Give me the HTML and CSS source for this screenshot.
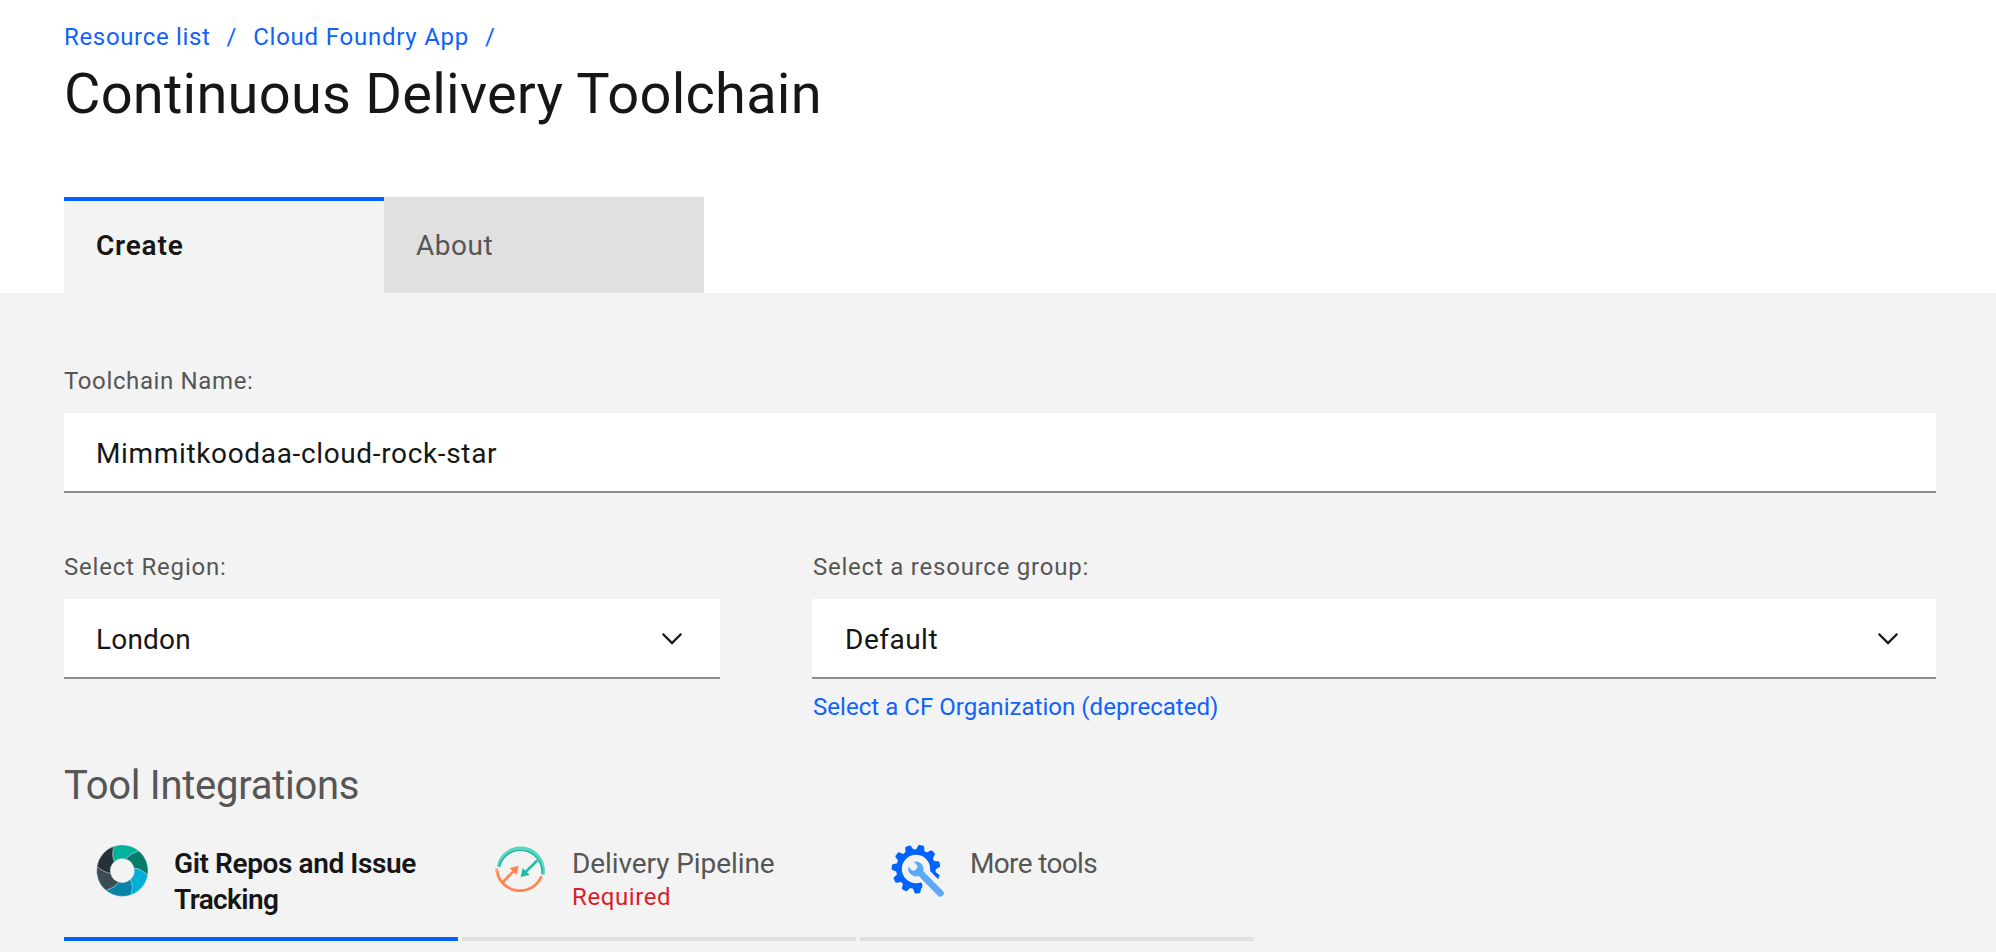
FILE: index.html
```
<!DOCTYPE html>
<html lang="en">
<head>
<meta charset="utf-8">
<title>Continuous Delivery Toolchain</title>
<link rel="stylesheet" href="styles.css">
</head>
<body>
<header class="header">
  <nav class="breadcrumb">
    <a class="crumb crumb-first" href="#">Resource list</a><span class="slash">/</span>
    <a class="crumb" href="#">Cloud Foundry App</a><span class="slash">/</span>
  </nav>
  <h1 class="title">Continuous Delivery Toolchain</h1>
  <div class="tabs">
    <div class="tab tab-active">Create</div>
    <div class="tab tab-about">About</div>
  </div>
</header>
<main class="content">
  <div class="field">
    <label class="label label-name">Toolchain Name:</label>
    <div class="control"><span class="value value-name">Mimmitkoodaa-cloud-rock-star</span></div>
  </div>
  <div class="row">
    <div class="field">
      <label class="label">Select Region:</label>
      <div class="control"><span class="value">London</span>
        <svg class="chevron" viewBox="0 0 22 14"><path d="M1.7 1.7 11 11 20.3 1.7"/></svg>
      </div>
    </div>
    <div class="field">
      <label class="label label-group">Select a resource group:</label>
      <div class="control"><span class="value value-group">Default</span>
        <svg class="chevron" viewBox="0 0 22 14"><path d="M1.7 1.7 11 11 20.3 1.7"/></svg>
      </div>
      <a class="org-link" href="#">Select a CF Organization (deprecated)</a>
    </div>
  </div>
  <h2 class="section-title">Tool Integrations</h2>
  <div class="tools">
    <div class="tool tool-active">
      <svg class="tool-icon" viewBox="42 39 168 168">
        <defs><path id="wedge" d="M100.7 49.6A77 77 0 0 1 176.5 63Q148 72 138.1 87.8A36 36 0 0 0 102.9 95.3Q94.2 78.8 100.7 49.6Z"/></defs>
        <g stroke="#b9cfd2" stroke-width="1.2">
          <use href="#wedge" fill="#00b299"/>
          <use href="#wedge" fill="#047c69" transform="rotate(60 127 122)"/>
          <use href="#wedge" fill="#00b0d7" transform="rotate(120 127 122)"/>
          <use href="#wedge" fill="#0784aa" transform="rotate(180 127 122)"/>
          <use href="#wedge" fill="#3c4c56" transform="rotate(240 127 122)"/>
          <use href="#wedge" fill="#243139" transform="rotate(300 127 122)"/>
        </g>
      </svg>
      <div class="tool-name name-git">Git Repos and Issue<br><span class="tracking">Tracking</span></div>
    </div>
    <div class="tool">
      <svg class="tool-icon" viewBox="37 37 168 168" fill="none">
        <path d="M56 108A68 68 0 0 1 190 132" stroke="#5ad5c3" stroke-width="9"/>
        <path d="M59 109A65 65 0 0 1 187 130" stroke="#1db9a3" stroke-width="5"/>
        <path d="M173 89 136 126" stroke="#22bba6" stroke-width="8"/>
        <path d="M123 139 129 112 150 133Z" fill="#22bba6"/>
        <path d="M51 113A70 68 0 0 0 186 137" stroke="#ffa27b" stroke-width="9"/>
        <path d="M54 122A67 65 0 0 0 184 137" stroke="#ff7d4c" stroke-width="5"/>
        <path d="M67 157 104 119" stroke="#ff8353" stroke-width="8"/>
        <path d="M117 105 90 112 111 133Z" fill="#ff8353"/>
      </svg>
      <div class="tool-name">Delivery Pipeline<div class="required">Required</div></div>
    </div>
    <div class="tool">
      <svg class="tool-icon" viewBox="30 39 168 168">
        <defs><path id="tooth" d="M94 64 99 47Q100 44 103 44H113Q116 44 117 47L122 64Z"/></defs>
        <g fill="#0062ff">
          <use href="#tooth" transform="rotate(13 108 117)"/>
          <use href="#tooth" transform="rotate(45.7 108 117)"/>
          <use href="#tooth" transform="rotate(78.4 108 117)"/>
          <use href="#tooth" transform="rotate(111.1 108 117)"/>
          <use href="#tooth" transform="rotate(176.5 108 117)"/>
          <use href="#tooth" transform="rotate(209.2 108 117)"/>
          <use href="#tooth" transform="rotate(241.9 108 117)"/>
          <use href="#tooth" transform="rotate(274.6 108 117)"/>
          <use href="#tooth" transform="rotate(307.3 108 117)"/>
          <use href="#tooth" transform="rotate(340 108 117)"/>
        </g>
        <circle cx="108" cy="117" r="51" fill="none" stroke="#0062ff" stroke-width="17"/>
        <path d="M148 121 182 155 160 189 127 189V162L108 142Z" fill="#f3f3f3"/>
        <path d="M101 95A24 24 0 0 1 130 124L188 182A9.5 9.5 0 0 1 174 197L116 138A24 24 0 0 1 85 110L95 120Q101 125 108 118 115 111 110 104Z" fill="#5aaafa"/>
      </svg>
      <div class="tool-name name-more">More tools</div>
    </div>
  </div>
</main>
</body>
</html>
```
FILE: styles.css
```
* { box-sizing: border-box; }
body { margin: 0; width: 1996px; height: 952px; overflow: hidden; background: #f3f3f3; color: #161616; font-family: Roboto, "Liberation Sans", sans-serif; font-weight: 400; }
a { color: #0f62fe; text-decoration: none; }
.header { height: 293px; padding: 21px 60px 0 64px; background: #fff; }
.breadcrumb { display: flex; height: 32px; font-size: 24px; line-height: 32px; letter-spacing: .77px; white-space: nowrap; color: #0f62fe; }
.crumb-first { letter-spacing: .66px; }
.slash { margin: 0 16px; }
.title { margin: 9px 0 71px; font-size: 56px; line-height: 64px; font-weight: 400; letter-spacing: .24px; white-space: nowrap; }
.tabs { display: flex; height: 96px; }
.tab { width: 320px; padding: 31px 32px 0; background: #e0e0e0; color: #565656; font-size: 28px; line-height: 36px; letter-spacing: .5px; }
.tab-active { padding-top: 27px; border-top: 4px solid #0062ff; background: #f3f3f3; color: #161616; font-weight: 600; letter-spacing: .8px; }
.content { padding: 72px 60px 0 64px; }
.field { display: flex; flex-direction: column; }
.label { margin-bottom: 16px; font-size: 24px; line-height: 32px; letter-spacing: .8px; color: #565656; white-space: nowrap; }
.label-name { letter-spacing: .63px; }
.label-group { padding-left: 1px; letter-spacing: .77px; }
.control { display: flex; justify-content: space-between; align-items: center; height: 80px; padding: 2px 37px 0 32px; background: #fff; border-bottom: 2px solid #8d8d8d; }
.value { padding-top: 2px; font-size: 28px; line-height: 36px; letter-spacing: .2px; }
.value-name { letter-spacing: .65px; }
.value-group { padding-left: 1px; letter-spacing: .5px; }
.chevron { width: 22px; height: 14px; fill: none; stroke: #161616; stroke-width: 2.3; }
.row { display: grid; grid-template-columns: 656px 1124px; column-gap: 92px; margin-top: 58px; height: 172px; }
.org-link { margin-top: 12px; padding-left: 1px; font-size: 24px; line-height: 32px; letter-spacing: .04px; white-space: nowrap; }
.section-title { margin: 39px 0 -1px; font-size: 40px; line-height: 48px; font-weight: 400; letter-spacing: -.27px; color: #565656; }
.tools { display: flex; gap: 4px; }
.tool { display: flex; gap: 24px; width: 394px; height: 132px; padding: 34px 0 0 30px; border-bottom: 4px solid #e0e0e0; color: #565656; }
.tool-active { border-bottom-color: #0062ff; color: #161616; font-weight: 600; }
.tool-icon { flex: none; width: 56px; height: 56px; }
.tool-name { padding-top: 3px; font-size: 28px; line-height: 36px; letter-spacing: -.08px; white-space: nowrap; }
.name-git { letter-spacing: -.4px; }
.tracking { letter-spacing: -.6px; }
.name-more { letter-spacing: -.65px; }
.required { margin-top: -1px; font-size: 24px; line-height: 32px; letter-spacing: .6px; color: #da1e28; }
```
